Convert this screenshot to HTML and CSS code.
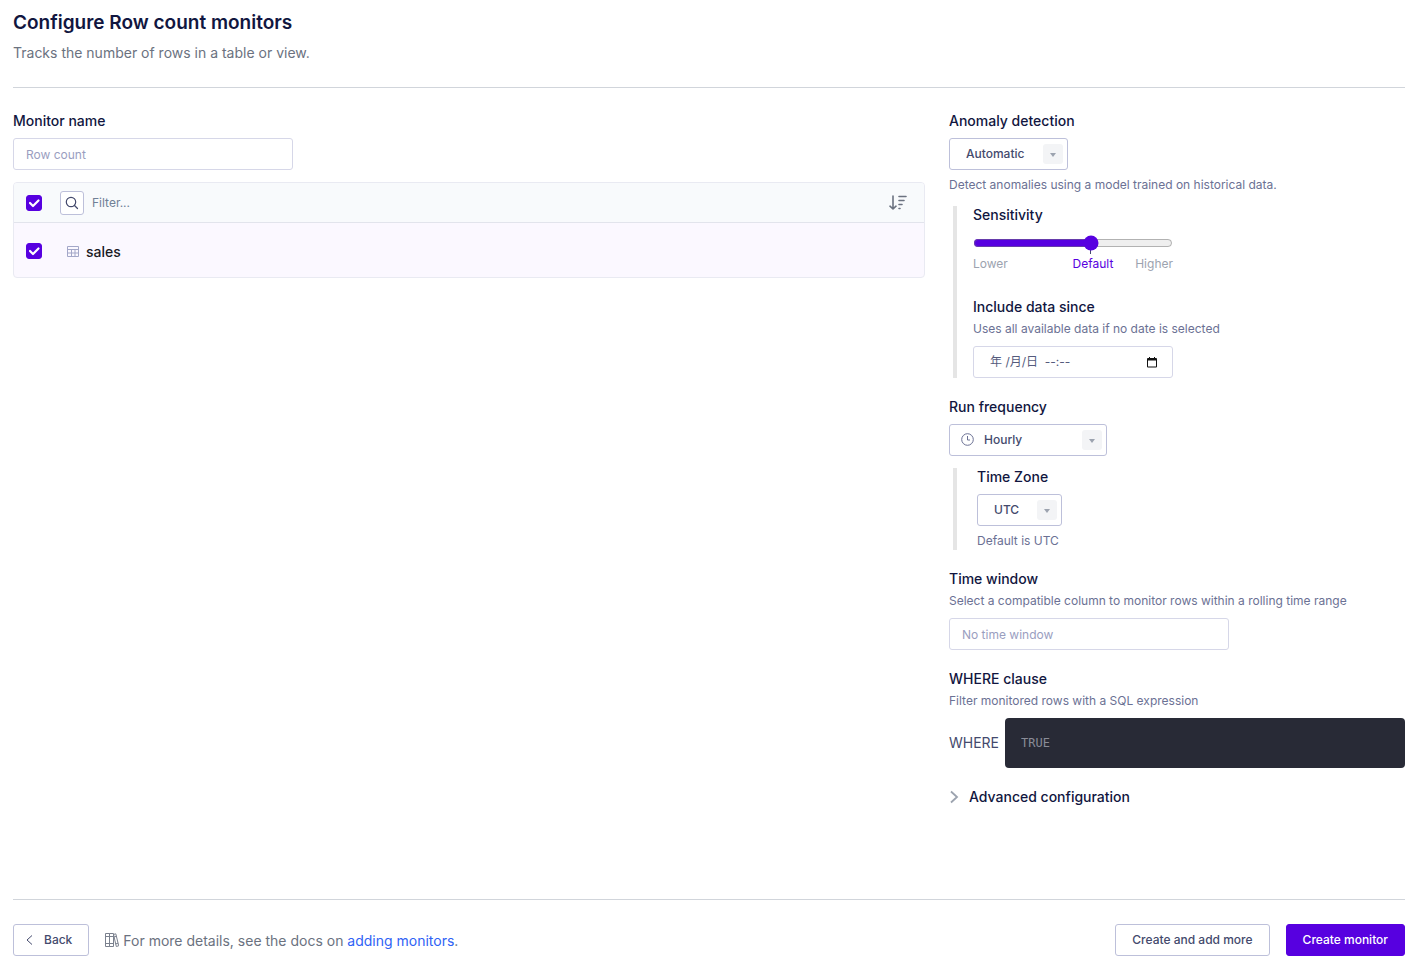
FILE: index.html
```html
<!DOCTYPE html>
<html lang="en">
<head>
<meta charset="utf-8">
<title>Configure Row count monitors</title>
<link rel="stylesheet" href="styles.css">
</head>
<body>
<form class="page">
  <header class="page-header">
    <h1 class="title">Configure Row count monitors</h1>
    <p class="subtitle">Tracks the number of rows in a table or view.</p>
  </header>

  <main class="columns">
    <section class="left">
      <label class="label" for="name">Monitor name</label>
      <input class="text-input wide" id="name" type="text" placeholder="Row count">

      <div class="tables">
        <div class="tables-head">
          <input class="check" type="checkbox" checked aria-label="Select all">
          <button class="search-btn" type="button" aria-label="Search">
            <svg width="14" height="14" viewBox="0 0 14 14" fill="none" stroke="#444a6d" stroke-width="1.2" stroke-linecap="round"><circle cx="6" cy="6" r="4.7"/><path d="M9.5 9.5L12.500 12.500"/></svg>
          </button>
          <input class="filter" type="text" placeholder="Filter..." aria-label="Filter">
          <button class="icon-btn" type="button" aria-label="Sort">
            <svg width="18" height="16" viewBox="0 0 18 16" fill="none" stroke="#6b7280" stroke-width="1.6" stroke-linecap="round"><path d="M4 1v13M1 11.200L4 14l3-2.800M10 1.500h7M10 5.500h5M10 9.500h3M10 13.500h1"/></svg>
          </button>
        </div>
        <div class="tables-row">
          <input class="check" id="sales" type="checkbox" checked>
          <label class="table-name" for="sales">
            <svg width="12" height="14" viewBox="0 0 12 14" fill="none" stroke="#a3a7c8"><path d="M.5 1.500h11v10h-11zM.5 4.500h11M.5 8h11M4.500 4.500v7M8 4.500v7"/></svg>
            sales
          </label>
        </div>
      </div>
    </section>

    <section class="right">
      <div class="field">
        <label class="label" for="detection">Anomaly detection</label>
        <div class="select-box">
          <select class="select select-automatic" id="detection"><option>Automatic</option></select>
          <span class="caret"></span>
        </div>
        <p class="help below">Detect anomalies using a model trained on historical data.</p>
        <div class="nested">
          <label class="label flush" for="sensitivity">Sensitivity</label>
          <input class="slider" id="sensitivity" type="range" min="0" max="10" value="6" list="marks">
          <datalist id="marks"><option value="6"></option></datalist>
          <div class="scale"><span>Lower</span><span class="scale-default">Default</span><span class="scale-high">Higher</span></div>
          <label class="label tight" for="since">Include data since</label>
          <p class="help above">Uses all available data if no date is selected</p>
          <div class="date-box">
            <input class="date-input" id="since" type="text" placeholder="年 /月/日  --:--">
            <button class="icon-btn" type="button" aria-label="Pick a date">
              <svg width="10" height="11" viewBox="0 0 10 11"><path d="M2 0h1v1h4V0h1v1h1a1 1 0 0 1 1 1v7.500a1 1 0 0 1-1 1H1a1 1 0 0 1-1-1V2a1 1 0 0 1 1-1h1zM1 3.500v6h8v-6z" fill="#111" fill-rule="evenodd"/></svg>
            </button>
          </div>
        </div>
      </div>

      <div class="field">
        <label class="label" for="frequency">Run frequency</label>
        <div class="select-box">
          <select class="select select-hourly" id="frequency"><option>Hourly</option></select>
          <svg class="clock" width="13" height="13" viewBox="0 0 13 13" fill="none" stroke="#6b7194"><circle cx="6.500" cy="6.500" r="5.800"/><path d="M6.500 3v4H9"/></svg>
          <span class="caret"></span>
        </div>
        <div class="nested deep">
          <label class="label" for="zone">Time Zone</label>
          <div class="select-box">
            <select class="select select-zone" id="zone"><option>UTC</option></select>
            <span class="caret"></span>
          </div>
          <p class="help below">Default is UTC</p>
        </div>
      </div>

      <div class="field">
        <label class="label tight" for="window">Time window</label>
        <p class="help above">Select a compatible column to monitor rows within a rolling time range</p>
        <input class="text-input wide" id="window" type="text" placeholder="No time window">
      </div>

      <div class="field">
        <label class="label tight" for="where">WHERE clause</label>
        <p class="help above">Filter monitored rows with a SQL expression</p>
        <div class="where">
          <span>WHERE</span>
          <input class="code" id="where" type="text" placeholder="TRUE">
        </div>
      </div>

      <button class="advanced" type="button">
        <svg width="10" height="14" viewBox="0 0 10 14" fill="none" stroke="#9ca3af" stroke-width="1.800"><path d="M2 1.500L8 7l-6 5.500"/></svg>
        Advanced configuration
      </button>
    </section>
  </main>

  <footer class="page-footer">
    <button class="btn btn-back" type="button">
      <svg width="7" height="10" viewBox="0 0 7 10" fill="none" stroke="#444a6d"><path d="M6 .5L1 5l5 4.500"/></svg>
      Back
    </button>
    <p class="docs">
      <svg width="14" height="15" viewBox="0 0 14 15" fill="none" stroke="#7b818e"><path d="M.5 .5h4v13h-4zM4.500 .5h4v13h-4zM.5 3.500h8M.5 10.500h8M8.500 1.500l2.300-.7 2.900 12-2.400.7zM9 4l2.400-.7M10.600 10.900l2.500-.7"/></svg>
      <span class="docs-text">For more details, see the docs on <a class="link" href="#docs">adding monitors</a>.</span>
    </p>
    <button class="btn" type="button">Create and add more</button>
    <button class="btn btn-primary" type="submit">Create monitor</button>
  </footer>
</form>
</body>
</html>
```
FILE: styles.css
```css
* { box-sizing: border-box; }

body {
  margin: 0;
  background: #fff;
  color: #444a6d;
  font-family: Inter, "Noto Sans CJK SC", sans-serif;
  font-size: 12px;
  line-height: 18px;
}

h1, p { margin: 0; }
input, select, button { font: inherit; color: inherit; margin: 0; }
button { cursor: pointer; }
svg { display: block; flex: none; }

.page {
  display: flex;
  flex-direction: column;
  min-height: 100vh;
  padding: 9px 13px 10px;
}

.page-header {
  padding-bottom: 24px;
  border-bottom: 1px solid #d1d5db;
}
.title {
  color: #111640;
  font-size: 19px;
  font-weight: 600;
  line-height: 28px;
}
.subtitle {
  margin-top: 6px;
  color: #6b7280;
  font-size: 14px;
  line-height: 20px;
}

.columns {
  display: grid;
  grid-template-columns: 2fr 1fr;
  gap: 24px;
  flex: 1;
  padding: 24px 0;
}
.left, .right { min-width: 0; }

.label {
  display: block;
  margin-bottom: 8px;
  color: #111640;
  font-size: 14px;
  font-weight: 500;
}
.label.tight { margin-bottom: 4px; }
.label.flush { margin-bottom: 0; }
.help { color: #6b7194; }
.help.below { margin-top: 6px; }
.help.above { margin-bottom: 8px; }

.text-input {
  display: block;
  height: 32px;
  padding: 1px 12px 0;
  border: 1px solid #d6d7e8;
  border-radius: 3px;
  background: #fff;
}
.text-input.wide { width: 280px; max-width: 100%; }
.text-input::placeholder { color: #9a9ebf; opacity: 1; }

.tables {
  margin-top: 12px;
  border: 1px solid #e9eaf2;
  border-radius: 4px;
  background: #fbf8ff;
  overflow: hidden;
}
.tables-head {
  display: flex;
  align-items: center;
  height: 40px;
  padding: 0 17px 0 12px;
  border-bottom: 1px solid #e2e4ec;
  background: #f8fafc;
}
.tables-row {
  display: flex;
  align-items: center;
  height: 54px;
  padding: 2px 12px 0;
}
.table-name {
  display: flex;
  align-items: center;
  gap: 7px;
  margin-left: 25px;
  padding-top: 1px;
  color: #1a1a1f;
  font-size: 14px;
  font-weight: 500;
}
.check {
  appearance: none;
  flex: none;
  width: 16px;
  height: 16px;
  border-radius: 3px;
  border: 1px solid #5700e0;
}
.check:checked {
  background: #5700e0 url("data:image/svg+xml,%3Csvg xmlns='http://www.w3.org/2000/svg' viewBox='0 0 16 16' fill='none' stroke='white' stroke-width='2.200' stroke-linecap='round' stroke-linejoin='round'%3E%3Cpath d='M4 8l3 3 5.500-5.500'/%3E%3C/svg%3E") center / 16px;
}
.search-btn {
  display: grid;
  place-items: center;
  width: 24px;
  height: 24px;
  margin-left: 18px;
  padding: 0;
  border: 1px solid #bdc0da;
  border-radius: 3px;
  background: #fff;
}
.filter {
  flex: 1;
  min-width: 0;
  height: 24px;
  padding: 0 8px;
  border: 0;
  background: transparent;
}
.filter::placeholder { color: #718096; opacity: 1; }
.icon-btn { padding: 0; border: 0; background: none; }

.field { margin-bottom: 20px; }
.select-box { position: relative; width: fit-content; }
.select {
  appearance: none;
  display: block;
  height: 32px;
  padding: 0 16px;
  border: 1px solid #bdc0da;
  border-radius: 3px;
  background: #fff;
  font-weight: 500;
}
.select-automatic { width: 119px; }
.select-hourly { width: 158px; padding-left: 34px; }
.select-zone { width: 85px; }
.caret {
  position: absolute;
  top: 6px;
  right: 5px;
  display: grid;
  place-items: center;
  width: 20px;
  height: 20px;
  border-radius: 3px;
  background: #f3f4f6;
  pointer-events: none;
}
.caret::after {
  content: "";
  margin-top: 2px;
  border: 3px solid transparent;
  border-top: 4px solid #9ca3af;
  border-bottom: 0;
}
.clock {
  position: absolute;
  top: 9px;
  left: 12px;
  pointer-events: none;
}

.nested {
  margin: 12px 0 0 4px;
  padding-left: 16px;
  border-left: 4px solid #e5e5e5;
}
.nested.deep { padding-left: 20px; }

.slider {
  display: block;
  width: 200px;
  height: 18px;
  margin-top: 10px;
  accent-color: #5700e0;
}
.scale {
  display: grid;
  grid-template-columns: 40% 40% 20%;
  width: 200px;
  margin: 3px 0 25px;
  color: #9ca3af;
}
.scale-default { color: #5700e0; text-align: center; }
.scale-high { text-align: right; }

.date-box {
  display: flex;
  align-items: center;
  width: 200px;
  height: 32px;
  padding: 0 15px 0 16px;
  border: 1px solid #d6d7e8;
  border-radius: 3px;
}
.date-input {
  flex: 1;
  min-width: 0;
  padding: 0;
  border: 0;
  background: none;
}
.date-input::placeholder { color: #555b7d; opacity: 1; }

.where {
  display: flex;
  align-items: center;
  gap: 6px;
  font-size: 14px;
}
.code {
  flex: 1;
  min-width: 0;
  height: 50px;
  padding: 0 16px;
  border: 0;
  border-radius: 4px;
  background: #282a36;
  color: #f8f8f2;
  font-family: "DejaVu Sans Mono", monospace;
  font-size: 12px;
}
.code::placeholder { color: #8a8c98; opacity: 1; }

.advanced {
  display: flex;
  align-items: center;
  gap: 10px;
  padding: 0;
  border: 0;
  background: none;
  color: #111640;
  font-size: 14px;
  font-weight: 500;
}

.page-footer {
  display: flex;
  align-items: center;
  gap: 16px;
  padding-top: 24px;
  border-top: 1px solid #d1d5db;
}
.btn {
  display: flex;
  align-items: center;
  height: 32px;
  padding: 0 16px;
  border: 1px solid #bdc0da;
  border-radius: 3px;
  background: #fff;
  font-weight: 500;
}
.btn-back { gap: 11px; padding-left: 12px; }
.btn-primary { border-color: #5700e0; background: #5700e0; color: #fff; }
.docs {
  display: flex;
  align-items: center;
  gap: 4px;
  margin-right: auto;
  color: #6b7280;
  font-size: 14px;
}
.docs-text { padding-top: 2px; }
.link { color: #2f62f5; text-decoration: none; }
```
